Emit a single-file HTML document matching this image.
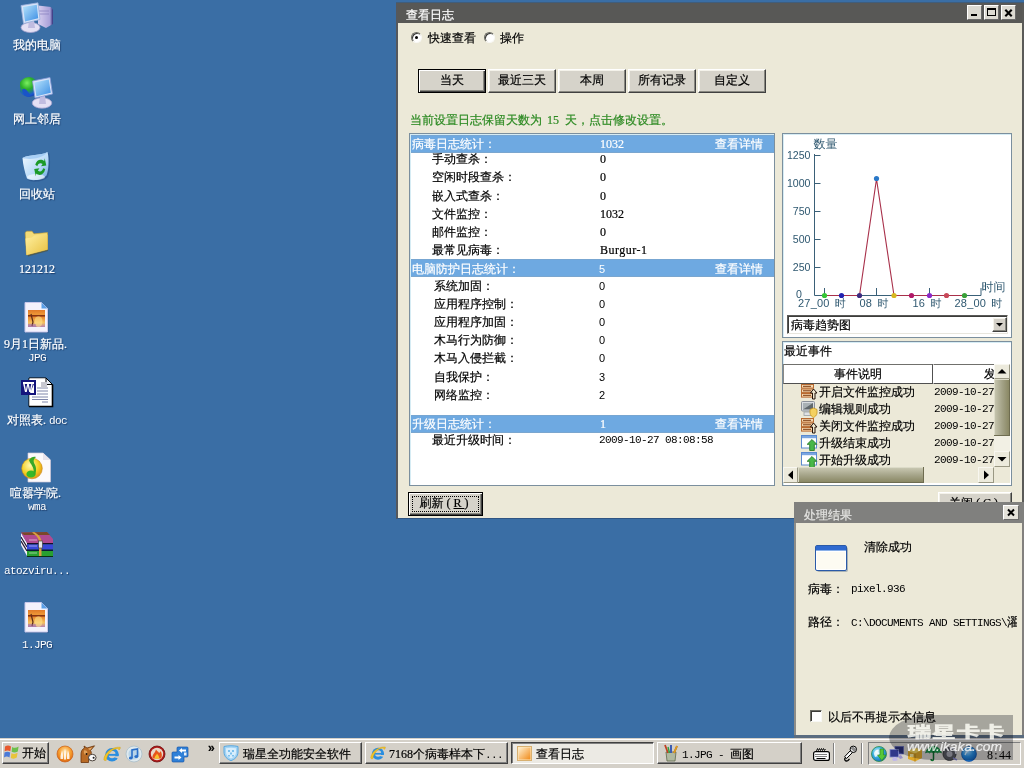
<!DOCTYPE html>
<html lang="zh-CN">
<head>
<meta charset="utf-8">
<title>查看日志</title>
<style>
html,body{margin:0;padding:0;}
body{width:1024px;height:768px;overflow:hidden;background:#3a6ea5;position:relative;
 font-family:"Liberation Serif","WenQuanYi Zen Hei",serif;font-size:12px;line-height:14px;color:#000;-webkit-text-stroke:0.2px;}
.a{position:absolute;white-space:nowrap;}
.ico{position:absolute;width:32px;height:32px;}
.dl{position:absolute;left:0;width:74px;text-align:center;color:#fff;white-space:nowrap;
 text-shadow:1px 1px 1px rgba(10,30,70,.6);}
/* main window */
#win{position:absolute;left:396px;top:3px;width:628px;height:516px;background:#ece9d8;
 box-sizing:border-box;border:0 solid #50504e;border-left:2px solid #55585c;border-right:2px solid #5a5a58;border-bottom:1px solid #2f5482;box-shadow:0 -1px 0 rgba(70,80,90,.55);}
#ttl{position:absolute;left:0;top:0;right:0;height:20px;background:#585856;}
.cb{position:absolute;top:3px;width:15px;height:15px;box-sizing:border-box;background:#dcdad2;
 border:1px solid;border-color:#fff #6a6a6a #6a6a6a #fff;}
.btn{position:absolute;box-sizing:border-box;background:#d6d3ca;text-align:center;
 border:1px solid;border-color:#fff #404040 #404040 #fff;box-shadow:inset -1px -1px 0 #888880,inset 1px 1px 0 #f4f2ea;}
.band{position:absolute;left:1px;right:1px;height:17px;background:#6fa5dc;color:#fff;}
.panel{position:absolute;box-sizing:border-box;background:#fff;border:1px solid #7b8f9e;box-shadow:inset 1px 1px 0 #d6ecf4;}

.rd{position:absolute;width:11px;height:11px;box-sizing:border-box;border-radius:50%;background:#fff;border:1px solid;border-color:#6c6c64 #f8f8f4 #f8f8f4 #6c6c64;box-shadow:inset 1px 1px 0 #3c3c38;}
.rd i{position:absolute;left:3px;top:3px;width:3px;height:3px;border-radius:50%;background:#000;}
.btn{line-height:14px;padding-top:3px;white-space:nowrap;}
.btn.def{border-color:#000;box-shadow:inset 1px 1px 0 #fff,inset -1px -1px 0 #404040,inset -2px -2px 0 #888880;}
.bandp{position:absolute;left:411px;width:363px;background:#6ea9e1;box-shadow:inset 0 1px 0 #77a6d2,inset 0 -1px 0 #7aa6cf;}
.w{color:#fff;}
.s{font-family:"Liberation Sans","WenQuanYi Zen Hei",sans-serif;font-size:11px;-webkit-text-stroke:0;}
.m{font-family:"Liberation Mono","WenQuanYi Zen Hei",monospace;font-size:11px;letter-spacing:-0.6px;-webkit-text-stroke:0;}
.sbb{position:absolute;box-sizing:border-box;background:#eceadc;border:1px solid;border-color:#f8f7f0 #9a9884 #9a9884 #f8f7f0;}
.sbb svg{position:absolute;left:-1px;top:-1px;}
/* taskbar */
#tb{position:absolute;left:0;top:738px;width:1024px;height:30px;background:#d4d0c8;}
#tb:before{content:'';position:absolute;left:0;top:1px;width:1024px;height:1px;background:#fff;}
.tk{position:absolute;top:3px;height:22px;box-sizing:border-box;background:#d4d0c8;
 border:1px solid;border-color:#fff #404040 #404040 #fff;box-shadow:inset -1px -1px 0 #808080;}
</style>
</head>
<body>

<!-- DESKTOP ICONS -->
<div id="desk">
 <!-- 我的电脑 -->
 <svg class="a" style="left:20px;top:2px" width="34" height="32" viewBox="0 0 34 32"><defs><linearGradient id="scr" x1="0" y1="0" x2="1" y2="1"><stop offset="0" stop-color="#b8e4fc"/><stop offset="1" stop-color="#3c8ee4"/></linearGradient><linearGradient id="twr" x1="0" y1="0" x2="1" y2="0"><stop offset="0" stop-color="#d8d0f0"/><stop offset=".8" stop-color="#a8a0d8"/><stop offset="1" stop-color="#30307a"/></linearGradient></defs><path d="M18 3.5 L31 5 L33 8 V22 L26 26 L18 22Z" fill="url(#twr)"/><path d="M19 9 H29 M19 12 H29" stroke="#8a84c0" stroke-width=".8"/><ellipse cx="10.5" cy="25.5" rx="9.5" ry="5" fill="#e4e0f4" stroke="#a8a4d0" stroke-width=".8"/><path d="M9 19 H14 L15 26 H8Z" fill="#c0bce0"/><path d="M1 3.5 L18 .8 L20 17.5 L3.5 21.5Z" fill="#d8e4f8" stroke="#9ab0dc" stroke-width=".8"/><path d="M3 5 L16.8 2.8 L18.2 16.2 L5 19.4Z" fill="url(#scr)"/></svg>
 <div class="dl" style="top:38px">我的电脑</div>
 <!-- 网上邻居 -->
 <svg class="a" style="left:20px;top:76px" width="34" height="33" viewBox="0 0 34 33"><defs><radialGradient id="glb" cx=".4" cy=".3" r=".8"><stop offset="0" stop-color="#7af060"/><stop offset=".4" stop-color="#2cae28"/><stop offset=".75" stop-color="#1c5ad0"/><stop offset="1" stop-color="#123a9a"/></radialGradient></defs><circle cx="9" cy="11" r="10" fill="url(#glb)"/><path d="M2 14 C5 10 8 16 11 20 C8 22 3 20 2 14Z" fill="#1a54c8"/><ellipse cx="22" cy="27" rx="9.8" ry="5.2" fill="#e4e0f4" stroke="#a8a4d0" stroke-width=".8"/><path d="M20 20 H25 L26 28 H19Z" fill="#c0bce0"/><path d="M12.5 5 L30 1.5 L32.5 18 L15 22Z" fill="#d8e4f8" stroke="#8a9cd8" stroke-width=".8"/><path d="M14.3 6.4 L28.8 3.5 L30.8 16.8 L16.4 20.2Z" fill="url(#scr)"/></svg>
 <div class="dl" style="top:112px">网上邻居</div>
 <!-- 回收站 -->
 <svg class="a" style="left:21px;top:151px" width="32" height="32" viewBox="0 0 32 32"><defs><linearGradient id="bin" x1="0" y1="0" x2="1" y2="1"><stop offset="0" stop-color="#f4faff"/><stop offset=".6" stop-color="#b8daf8"/><stop offset="1" stop-color="#6aa4e0"/></linearGradient></defs><path d="M2 7 C8 3 20 5 27 1 C29 8 28 20 26 25 C22 30 10 31 6 28 C4 22 2 14 2 7Z" fill="#1a3a70" opacity=".35" transform="translate(1,1)"/><path d="M1.5 7 C8 3 20 5 26.5 1 C28.5 8 27.5 20 25.5 24.5 C21 29.5 10 30.5 6 27.5 C4 22 2 14 1.5 7Z" fill="url(#bin)"/><path d="M1.5 7 C8 3 20 5 26.5 1 C22 8 8 9 1.5 7Z" fill="#9cc8f4" opacity=".8"/><ellipse cx="15" cy="26" rx="9" ry="3" fill="#fff" opacity=".6"/><g transform="translate(19.2,16.2) scale(1.05,1.45) translate(-19.2,-16.2)"><path d="M14.5 14.5 C15.5 11 20 10 23 12 L23.5 10 L25 15 L20 15.5 L21.5 14 C19.5 13 17 13.5 16.5 15.5Z M24 17.5 C23 21.5 18.5 22.5 15.5 20.5 L15 22.5 L13.5 17.5 L18.5 17 L17 18.5 C19 19.8 21.5 19 22 17Z" fill="#1c9a28"/></g></svg>
 <div class="dl" style="top:187px">回收站</div>
 <!-- folder -->
 <svg class="a" style="left:24px;top:230px" width="26" height="27" viewBox="0 0 26 27"><defs><linearGradient id="fld" x1="0" y1="0" x2="1" y2="1"><stop offset="0" stop-color="#fff0a0"/><stop offset="1" stop-color="#e8c040"/></linearGradient></defs><path d="M2 3.5 C2 2 3 1.5 4 1.5 H8.5 L10.5 4 L23 3 V20 L3 25.5Z" fill="#5a4a10" opacity=".5" transform="translate(1,1)"/><path d="M1.2 3.5 C1.2 2 2.2 1.2 3.2 1.2 H8 L10 3.8 L23.5 2.6 V19.5 L2.5 25Z" fill="#f4dc78" stroke="#c8a030" stroke-width=".6"/><path d="M1.5 8.5 L8 7.5 L10.5 5.5 L23.5 4.5 V19.5 L2.5 25Z" fill="url(#fld)"/></svg>
 <div class="dl" style="top:262px">121212</div>
 <!-- jpg -->
 <svg class="a" style="left:24px;top:302px" width="26" height="32" viewBox="0 0 26 32"><path d="M2 1.5 H18 L24.5 8 V31 H2Z" fill="#0a2a5a" opacity=".35"/><path d="M1 .5 H17.5 L23.5 6.5 V30 H1Z" fill="#f4f2fc" stroke="#c8c8ec" stroke-width="1"/><path d="M17.5 .5 L23.5 6.5 H17.5Z" fill="#5aa0e8"/><defs><linearGradient id="sun1" x1="0" y1="0" x2="0" y2="1"><stop offset="0" stop-color="#e07828"/><stop offset=".28" stop-color="#f09a38"/><stop offset=".34" stop-color="#9a3410"/><stop offset=".42" stop-color="#e88830"/><stop offset=".75" stop-color="#f4c060"/><stop offset="1" stop-color="#b880b0"/></linearGradient></defs><rect x="4" y="8" width="17" height="17" fill="url(#sun1)"/><path d="M7 12 L9 20 L8 24" stroke="#5a2a18" stroke-width="1.2" fill="none"/><ellipse cx="14.5" cy="19.5" rx="4" ry="5.5" fill="#ffe890" opacity=".55"/><path d="M4 13.6 H21" stroke="#7a2a10" stroke-width="1.3" opacity=".8"/><path d="M4 22 H12 V25 H4Z" fill="#a070b0" opacity=".45"/></svg>
 <div class="dl" style="top:338px;line-height:13px">9月1日新品<span style="letter-spacing:3px">.</span><br><span class="m">JPG</span></div>
 <!-- doc -->
 <svg class="a" style="left:20px;top:377px" width="34" height="31" viewBox="0 0 34 31"><path d="M9 1 H26 L32.5 7.5 V29.5 H9Z" fill="#fff" stroke="#000" stroke-width="1"/><path d="M9.5 1.5 H26 L32 7.5 V29 H9.5Z" fill="#fff"/><path d="M26 1 V7.5 H32.5Z" fill="#e8ecf4" stroke="#000" stroke-width="1"/><path d="M32.5 7.5 V29.5 H9" stroke="#000" stroke-width="1.6" fill="none"/><path d="M17 11 H28 M17 14 H28 M17 17 H28 M12 20 H28 M12 22.5 H28 M22 25 H28" stroke="#7078a0" stroke-width=".9"/><rect x="21" y="5" width="6" height="6" fill="#c8c8d0"/><rect x="1" y="3" width="15" height="15" fill="#14147c"/><rect x="3" y="5" width="11" height="11" fill="#fff"/><path d="M3 7 H14 V16 H3Z" fill="#14147c"/><path d="M14 7 V16 H10Z" fill="#fff"/><text x="8" y="15" font-size="10" font-weight="bold" font-family="Liberation Sans, sans-serif" fill="#fff" text-anchor="middle">W</text></svg>
 <div class="dl" style="top:413px">对照表<span style="letter-spacing:3px">.</span><span class="m">doc</span></div>
 <!-- wma -->
 <svg class="a" style="left:20px;top:452px" width="33" height="31" viewBox="0 0 33 31"><defs><radialGradient id="ylw" cx=".4" cy=".35" r=".7"><stop offset="0" stop-color="#fff8b0"/><stop offset=".6" stop-color="#f4d020"/><stop offset="1" stop-color="#e09018"/></radialGradient></defs><path d="M8 1 H23 L30.5 8 V30 H8Z" fill="#fcfafc" stroke="#d0c8d8" stroke-width=".7"/><path d="M23 1 L30.5 8 H23Z" fill="#e8e4ec"/><circle cx="12" cy="16.5" r="10.3" fill="url(#ylw)" stroke="#c88a18" stroke-width=".6"/><ellipse cx="11" cy="22" rx="4.6" ry="3.6" fill="#38b828"/><path d="M13.5 22 C15 15 10 12 9 8 C11 5 14 4 16 5 C14 7 13 8 14 11 C16 14 17 18 15 23Z" fill="#38a828"/></svg>
 <div class="dl" style="top:487px;line-height:13px">喧嚣学院<span style="letter-spacing:3px">.</span><br><span class="m">wma</span></div>
 <!-- rar -->
 <svg class="a" style="left:21px;top:531px" width="33" height="26" viewBox="0 0 33 26"><path d="M0 2 L6 12 V25 L0 14Z" fill="#f4f0f8"/><path d="M0 6 L6 16 M0 10 L6 20" stroke="#201830" stroke-width="1.2"/><path d="M0 1.5 L26 1 L32 8 V12 H6 Z" fill="#b04a90"/><path d="M0 1.5 L26 1 L29 4 H3Z" fill="#7a4828"/><rect x="6" y="12" width="26" height="1.5" fill="#181028"/><rect x="6" y="13.5" width="26" height="5" fill="#3848d8"/><rect x="6" y="18.5" width="26" height="1.5" fill="#0a1838"/><rect x="6" y="20" width="26" height="5" fill="#28a030"/><rect x="6" y="25" width="26" height="1" fill="#0a3010"/><path d="M13 1 C17 3 20 6 20.5 10 V25 H18 V10 C17.5 7 15 4 11 1.5Z" fill="#d8a040"/><rect x="17.5" y="10" width="4" height="7" fill="#e8e8e8" stroke="#303030" stroke-width=".6"/><path d="M8 9 H16 M8 15 H16 M8 22 H16" stroke="#fff" stroke-width="1.2" opacity=".5"/></svg>
 <div class="dl" style="top:563px"><span class="m">atozviru...</span></div>
 <!-- 1.jpg -->
 <svg class="a" style="left:24px;top:602px" width="26" height="32" viewBox="0 0 26 32"><path d="M2 1.5 H18 L24.5 8 V31 H2Z" fill="#0a2a5a" opacity=".35"/><path d="M1 .5 H17.5 L23.5 6.5 V30 H1Z" fill="#f4f2fc" stroke="#c8c8ec" stroke-width="1"/><path d="M17.5 .5 L23.5 6.5 H17.5Z" fill="#5aa0e8"/><defs><linearGradient id="sun2" x1="0" y1="0" x2="0" y2="1"><stop offset="0" stop-color="#e07828"/><stop offset=".28" stop-color="#f09a38"/><stop offset=".34" stop-color="#9a3410"/><stop offset=".42" stop-color="#e88830"/><stop offset=".75" stop-color="#f4c060"/><stop offset="1" stop-color="#b880b0"/></linearGradient></defs><rect x="4" y="8" width="17" height="17" fill="url(#sun2)"/><path d="M7 12 L9 20 L8 24" stroke="#5a2a18" stroke-width="1.2" fill="none"/><ellipse cx="14.5" cy="19.5" rx="4" ry="5.5" fill="#ffe890" opacity=".55"/><path d="M4 13.6 H21" stroke="#7a2a10" stroke-width="1.3" opacity=".8"/><path d="M4 22 H12 V25 H4Z" fill="#a070b0" opacity=".45"/></svg>
 <div class="dl" style="top:637px"><span class="m">1.JPG</span></div>
</div>

<!-- MAIN WINDOW -->
<div id="win">
<div class="o" style="position:absolute;left:-398px;top:-3px;width:0;height:0;">
 <div class="a" style="left:398px;top:3px;width:624px;height:20px;background:#585856;"></div>
 <div class="a" style="left:406px;top:8px;color:#fff;">查看日志</div>
 <div class="cb" style="left:967px;top:5px"><i style="position:absolute;left:3px;top:8px;width:6px;height:2px;background:#000"></i></div>
 <div class="cb" style="left:984px;top:5px"><i style="position:absolute;left:2px;top:2px;width:9px;height:8px;box-sizing:border-box;border:1px solid #000;border-top-width:2px"></i></div>
 <div class="cb" style="left:1001px;top:5px"><svg width="13" height="13" style="position:absolute;left:0;top:0"><path d="M3.3 3.8 L9.7 10.2 M9.7 3.8 L3.3 10.2" stroke="#000" stroke-width="2.1" fill="none"/></svg></div>

 <!-- radios -->
 <div class="rd" style="left:411px;top:32px"><i></i></div>
 <div class="a" style="left:428px;top:31px">快速查看</div>
 <div class="rd" style="left:484px;top:32px"></div>
 <div class="a" style="left:500px;top:31px">操作</div>

 <!-- period buttons -->
 <div class="btn def" style="left:418px;top:69px;width:68px;height:24px;">当天</div>
 <div class="btn" style="left:488px;top:69px;width:68px;height:24px;">最近三天</div>
 <div class="btn" style="left:558px;top:69px;width:68px;height:24px;">本周</div>
 <div class="btn" style="left:628px;top:69px;width:68px;height:24px;">所有记录</div>
 <div class="btn" style="left:698px;top:69px;width:68px;height:24px;">自定义</div>

 <div class="a" style="left:410px;top:113px;color:#2c8a22;">当前设置日志保留天数为 <span style="letter-spacing:0px;margin:0 3px 0 2px">15</span> 天，点击修改设置。</div>

 <!-- stats table -->
 <div class="panel" id="stat" style="left:409px;top:133px;width:366px;height:353px;"></div>
 <div class="bandp" style="top:135px;height:18px;"></div>
 <div class="bandp" style="top:259px;height:18px;"></div>
 <div class="bandp" style="top:415px;height:18px;"></div>

 <div class="a w" style="left:412px;top:137px">病毒日志统计：</div>
 <div class="a w" style="left:600px;top:137px">1032</div>
 <div class="a w" style="left:715px;top:137px">查看详情</div>
 <div class="a" style="left:432px;top:152px">手动查杀：</div><div class="a" style="left:600px;top:152px">0</div>
 <div class="a" style="left:432px;top:170px">空闲时段查杀：</div><div class="a" style="left:600px;top:170px">0</div>
 <div class="a" style="left:432px;top:189px">嵌入式查杀：</div><div class="a" style="left:600px;top:189px">0</div>
 <div class="a" style="left:432px;top:207px">文件监控：</div><div class="a" style="left:600px;top:207px">1032</div>
 <div class="a" style="left:432px;top:225px">邮件监控：</div><div class="a" style="left:600px;top:225px">0</div>
 <div class="a" style="left:432px;top:243px">最常见病毒：</div><div class="a" style="left:600px;top:243px;letter-spacing:.5px">Burgur-1</div>

 <div class="a w" style="left:412px;top:262px">电脑防护日志统计：</div>
 <div class="a w s" style="left:599px;top:262px">5</div>
 <div class="a w" style="left:715px;top:262px">查看详情</div>
 <div class="a" style="left:434px;top:279px">系统加固：</div><div class="a s" style="left:599px;top:279px">0</div>
 <div class="a" style="left:434px;top:297px">应用程序控制：</div><div class="a s" style="left:599px;top:297px">0</div>
 <div class="a" style="left:434px;top:315px">应用程序加固：</div><div class="a s" style="left:599px;top:315px">0</div>
 <div class="a" style="left:434px;top:333px">木马行为防御：</div><div class="a s" style="left:599px;top:333px">0</div>
 <div class="a" style="left:434px;top:351px">木马入侵拦截：</div><div class="a s" style="left:599px;top:351px">0</div>
 <div class="a" style="left:434px;top:370px">自我保护：</div><div class="a s" style="left:599px;top:370px">3</div>
 <div class="a" style="left:434px;top:388px">网络监控：</div><div class="a s" style="left:599px;top:388px">2</div>

 <div class="a w" style="left:412px;top:417px">升级日志统计：</div>
 <div class="a w" style="left:600px;top:417px">1</div>
 <div class="a w" style="left:715px;top:417px">查看详情</div>
 <div class="a" style="left:432px;top:433px">最近升级时间：</div><div class="a m" style="left:599px;top:433px">2009-10-27 08:08:58</div>

 <!-- bottom buttons -->
 <div class="btn def" style="left:408px;top:492px;width:75px;height:24px;"><span style="position:absolute;left:3px;top:3px;right:3px;bottom:3px;border:1px dotted #000"></span>刷新<span style="letter-spacing:3px;margin-left:3px">(<u>R</u>)</span></div>
 <div class="btn" style="left:938px;top:492px;width:74px;height:24px;">关闭<span style="letter-spacing:3px;margin-left:3px">(<u>C</u>)</span></div>

 <div class="panel" style="left:782px;top:133px;width:230px;height:205px;"></div>
 <svg class="a" style="left:782px;top:133px" width="230" height="205" viewBox="0 0 230 205" font-family="Liberation Sans, WenQuanYi Zen Hei, sans-serif" font-size="11" fill="#2f5870"><path d="M32.5 21 V162.5 H199 V155" stroke="#3a6078" stroke-width="1" fill="none"/><path d="M32.5 22.5 h6 M32.5 50.5 h6 M32.5 78.5 h6 M32.5 106.5 h6 M32.5 134.5 h6 M42.5 162.5 v-7.5 M94.5 162.5 v-7.5 M147.5 162.5 v-7.5 " stroke="#3a6078" stroke-width="1" fill="none"/><text x="28.5" y="25.5" text-anchor="end" font-size="10.6">1250</text><text x="28.5" y="53.5" text-anchor="end" font-size="10.6">1000</text><text x="28.5" y="81.5" text-anchor="end" font-size="10.6">750</text><text x="28.5" y="109.5" text-anchor="end" font-size="10.6">500</text><text x="28.5" y="137.5" text-anchor="end" font-size="10.6">250</text><text x="20" y="165" text-anchor="end" font-size="10.6">0</text><text x="31.5" y="15" font-size="12" font-family="Liberation Serif, WenQuanYi Zen Hei, serif">数量</text><text x="199.5" y="157.5" font-size="12" font-family="Liberation Serif, WenQuanYi Zen Hei, serif">时间</text><text x="16" y="173.5" xml:space="preserve" letter-spacing="0.2" word-spacing="2">27_00 时</text><text x="77.5" y="173.5" xml:space="preserve" letter-spacing="0.2" word-spacing="2">08 时</text><text x="130.5" y="173.5" xml:space="preserve" letter-spacing="0.2" word-spacing="2">16 时</text><text x="172.5" y="173.5" xml:space="preserve" letter-spacing="0.2" word-spacing="2">28_00 时</text><path d="M42.5 162.5 H77.5 L94.5 46 L112 162.5 H182.5" stroke="#a8304a" stroke-width="1.1" fill="none"/><circle cx="42.5" cy="162.5" r="2.6" fill="#35c535"/><circle cx="59.5" cy="162.5" r="2.6" fill="#2222b0"/><circle cx="77.5" cy="162.5" r="2.6" fill="#3c2a80"/><circle cx="94.5" cy="45.5" r="2.6" fill="#2a78c8"/><circle cx="112" cy="162.5" r="2.6" fill="#d8b820"/><circle cx="129.5" cy="162.5" r="2.6" fill="#b01868"/><circle cx="147.5" cy="162.5" r="2.6" fill="#8a28c8"/><circle cx="164.5" cy="162.5" r="2.6" fill="#c84858"/><circle cx="182.5" cy="162.5" r="2.6" fill="#38a038"/></svg>
 <div class="a" style="left:787px;top:315px;width:221px;height:19px;box-sizing:border-box;background:#fff;border:1px solid;border-color:#5a5a58 #e8e6de #e8e6de #5a5a58;box-shadow:inset 1px 1px 0 #3c3c3a;"></div>
 <div class="a" style="left:791px;top:318px">病毒趋势图</div>
 <div class="btn" style="left:992px;top:317px;width:15px;height:15px;padding:0;background:#d4d0c8"><svg width="13" height="13" style="position:absolute;left:0;top:0"><path d="M3 5 H10 L6.5 8.6Z" fill="#000"/></svg></div>

 <div class="panel" style="left:782px;top:341px;width:230px;height:145px;"></div>
 <div class="a" style="left:784px;top:344px">最近事件</div>
 <div class="a" style="left:783px;top:383px;width:211px;height:84px;background:#ece9d8;"></div>
 <div class="a" style="left:783px;top:364px;width:150px;height:20px;box-sizing:border-box;background:#fff;border:1px solid;border-color:#70706c #505050 #505050 #8a8a86;text-align:center;line-height:14px;padding-top:2px">事件说明</div>
 <div class="a" style="left:933px;top:364px;width:62px;height:20px;box-sizing:border-box;background:#fff;border:1px solid;border-color:#70706c #505050 #505050 #fff;overflow:hidden;"><span class="a" style="left:50px;top:2px">发生时间</span></div>
 <svg class="a" style="left:801px;top:384px" width="17" height="16" viewBox="0 0 17 16"><rect x="0.5" y="0.5" width="12" height="3.6" fill="#f6d8b0" stroke="#b86a30"/><rect x="0.5" y="5" width="12" height="3.6" fill="#f6d8b0" stroke="#b86a30"/><rect x="0.5" y="9.5" width="12" height="3.6" fill="#f6d8b0" stroke="#b86a30"/><path d="M2 2.3h8M2 6.8h8M2 11.3h8" stroke="#7a3a10" stroke-width="1"/><path d="M12.5 5 L16 9 H14 V15 H11.5 V9 H9.5Z" fill="#f0e8d0" stroke="#201008" stroke-width="1"/></svg>
 <div class="a" style="left:819px;top:385px">开启文件监控成功</div>
 <div class="a m" style="left:934px;top:385px;width:60px;overflow:hidden">2009-10-27 08:08</div>
 <svg class="a" style="left:801px;top:401px" width="17" height="17" viewBox="0 0 17 17"><rect x="0.5" y="0.5" width="13" height="9.5" rx="1" fill="#d8dce0" stroke="#8a9098"/><rect x="2" y="2" width="10" height="6.5" fill="#60686c"/><path d="M2 2h10L2 8.5Z" fill="#a8b0b4"/><rect x="3" y="11" width="8" height="3.5" fill="#e0e2e4" stroke="#9aa0a4" stroke-width=".8"/><path d="M9 8.5 L12.5 7 L16 8.5 V12 C16 14.5 13.5 16 12.5 16.5 C11.5 16 9 14.5 9 12Z" fill="#f4d060" stroke="#c89820" stroke-width=".8"/></svg>
 <div class="a" style="left:819px;top:402px">编辑规则成功</div>
 <div class="a m" style="left:934px;top:402px;width:60px;overflow:hidden">2009-10-27 08:08</div>
 <svg class="a" style="left:801px;top:418px" width="17" height="16" viewBox="0 0 17 16"><rect x="0.5" y="0.5" width="12" height="3.6" fill="#f6d8b0" stroke="#b86a30"/><rect x="0.5" y="5" width="12" height="3.6" fill="#f6d8b0" stroke="#b86a30"/><rect x="0.5" y="9.5" width="12" height="3.6" fill="#f6d8b0" stroke="#b86a30"/><path d="M2 2.3h8M2 6.8h8M2 11.3h8" stroke="#7a3a10" stroke-width="1"/><path d="M12.5 5 L16 9 H14 V15 H11.5 V9 H9.5Z" fill="#f0e8d0" stroke="#201008" stroke-width="1"/></svg>
 <div class="a" style="left:819px;top:419px">关闭文件监控成功</div>
 <div class="a m" style="left:934px;top:419px;width:60px;overflow:hidden">2009-10-27 08:08</div>
 <svg class="a" style="left:801px;top:435px" width="17" height="17" viewBox="0 0 17 17"><rect x="0.5" y="0.5" width="15" height="12.5" fill="#fff" stroke="#5a8ad0"/><rect x="1" y="1" width="14" height="2.2" fill="#7aa6e0"/><path d="M11 4.5 L15.8 9.3 H13.3 V15.5 H8.7 V9.3 H6.2Z" fill="#48b848" stroke="#2a7a2a" stroke-width=".9"/></svg>
 <div class="a" style="left:819px;top:436px">升级结束成功</div>
 <div class="a m" style="left:934px;top:436px;width:60px;overflow:hidden">2009-10-27 08:08</div>
 <svg class="a" style="left:801px;top:452px" width="17" height="17" viewBox="0 0 17 17"><rect x="0.5" y="0.5" width="15" height="12.5" fill="#fff" stroke="#5a8ad0"/><rect x="1" y="1" width="14" height="2.2" fill="#7aa6e0"/><path d="M11 4.5 L15.8 9.3 H13.3 V15.5 H8.7 V9.3 H6.2Z" fill="#48b848" stroke="#2a7a2a" stroke-width=".9"/></svg>
 <div class="a" style="left:819px;top:453px">开始升级成功</div>
 <div class="a m" style="left:934px;top:453px;width:60px;overflow:hidden">2009-10-27 08:08</div>
 <div class="a" style="left:994px;top:364px;width:16px;height:103px;background:#f2f0e4;"></div>
 <div class="sbb" style="left:994px;top:364px;width:16px;height:15px;"><svg width="16" height="15"><path d="M3.5 9.5 H12.5 L8 5Z" fill="#000"/></svg></div>
 <div class="a" style="left:994px;top:379px;width:16px;height:57px;background:linear-gradient(90deg,#c9c8b2 0%,#a4a388 50%,#86845f 100%);box-shadow:inset -1px -1px 0 #6e6c50,inset 1px 1px 0 #dcdbc8;"></div>
 <div class="sbb" style="left:994px;top:451px;width:16px;height:16px;"><svg width="16" height="16"><path d="M3.5 6 H12.5 L8 10.5Z" fill="#000"/></svg></div>
 <div class="a" style="left:783px;top:467px;width:211px;height:16px;background:#ece9d8;"></div>
 <div class="sbb" style="left:783px;top:467px;width:15px;height:16px;"><svg width="15" height="16"><path d="M10 3.5 V12.5 L5 8Z" fill="#000"/></svg></div>
 <div class="a" style="left:798px;top:467px;width:126px;height:16px;background:linear-gradient(180deg,#cccbb6 0%,#a6a58a 50%,#86845f 100%);box-shadow:inset -1px -1px 0 #6e6c50,inset 1px 1px 0 #dcdbc8;"></div>
 <div class="sbb" style="left:978px;top:467px;width:16px;height:16px;"><svg width="16" height="16"><path d="M6 3.5 V12.5 L11 8Z" fill="#000"/></svg></div>
 <div class="a" style="left:994px;top:467px;width:16px;height:16px;background:#ece9d8;"></div>

</div>
</div>

<!-- POPUP -->
<div id="pop" style="position:absolute;left:794px;top:502px;width:230px;height:236px;background:#ece9d8;">
<div class="o" style="position:absolute;left:-794px;top:-502px;width:0;height:0;">
 <div class="a" style="left:794px;top:502px;width:230px;height:21px;background:#80807e;"></div>
 <div class="a" style="left:794px;top:523px;width:2px;height:213px;background:#8c8c88;"></div>
 <div class="a" style="left:1022px;top:523px;width:2px;height:213px;background:#82807e;"></div>
 <div class="a" style="left:794px;top:735px;width:230px;height:3px;background:#5a6c80;"></div>
 <div class="a" style="left:804px;top:508px;color:#e4e4e2;">处理结果</div>
 <div class="cb" style="left:1003px;top:505px;width:16px;height:15px;background:#e4e2da"><svg width="14" height="13" style="position:absolute;left:0;top:0"><path d="M4 3.5 L10 9.5 M10 3.5 L4 9.5" stroke="#000" stroke-width="2" fill="none"/></svg></div>
 <svg class="a" style="left:815px;top:545px" width="34" height="28" viewBox="0 0 34 28"><rect x="2" y="2" width="31" height="25" rx="2" fill="#5a708c" opacity=".45"/><rect x="0.5" y="0.5" width="31" height="25" rx="1.5" fill="#fff" stroke="#2a5aa8"/><rect x="1" y="1" width="30" height="4" fill="#2f6ad0"/><rect x="1" y="5" width="30" height="1" fill="#8ab0e8"/><rect x="2" y="7" width="28" height="17" fill="#fdfbf2"/></svg>
 <div class="a" style="left:864px;top:540px">清除成功</div>
 <div class="a" style="left:808px;top:582px">病毒：</div>
 <div class="a m" style="left:851px;top:582px;">pixel.936</div>
 <div class="a" style="left:808px;top:615px">路径：</div>
 <div class="a" style="left:851px;top:615px;width:166px;overflow:hidden;"><span class="m">C:\DOCUMENTS AND SETTINGS\</span>濯</div>
 <div class="a" style="left:810px;top:710px;width:12px;height:12px;box-sizing:border-box;background:#fff;border:1px solid;border-color:#6c6c64 #f8f8f4 #f8f8f4 #6c6c64;box-shadow:inset 1px 1px 0 #3c3c38;"></div>
 <div class="a" style="left:828px;top:710px">以后不再提示本信息</div>
</div>
</div>

<!-- TASKBAR -->
<div id="tb">
<div class="o" style="position:absolute;left:0;top:-738px;width:0;height:0;">
 <!-- start -->
 <div class="tk" style="left:2px;top:742px;width:47px;height:22px;"></div>
 <svg class="a" style="left:4px;top:744px" width="16" height="16" viewBox="0 0 16 16"><path d="M1 2.5 C3 1.2 5 1.2 7 2.5 L6.3 7.3 C4.5 6.2 2.6 6.2 0.6 7.3Z" fill="#e8582c"/><path d="M8.2 3 C10 4.2 12 4.2 14.6 2.6 L13.8 7.4 C11.6 8.8 9.6 8.8 7.6 7.8Z" fill="#6cc04a"/><path d="M0.5 8.6 C2.5 7.4 4.4 7.4 6.2 8.6 L5.5 13.4 C3.6 12.2 1.8 12.2 0 13.4Z" fill="#4a7ad8"/><path d="M7.4 9.2 C9.4 10.2 11.4 10.2 13.6 8.8 L12.8 13.6 C10.8 15 8.8 15 6.8 14Z" fill="#e8c43a"/></svg>
 <div class="a" style="left:22px;top:746px;font-weight:bold;">开始</div>
 <!-- quick launch -->
 <svg class="a" style="left:56px;top:745px" width="18" height="18" viewBox="0 0 18 18"><defs><radialGradient id="g1" cx=".5" cy=".35" r=".7"><stop offset="0" stop-color="#ffe8b8"/><stop offset=".5" stop-color="#f8a030"/><stop offset="1" stop-color="#d85c08"/></radialGradient></defs><circle cx="9" cy="9" r="8" fill="url(#g1)" stroke="#c86018" stroke-width=".7"/><path d="M4.5 14 C4 10 5.5 8 6 5.5 C7 8 7.2 10 7 14Z M8 14.5 C7.6 9 8.6 6 9 3.5 C9.6 6 10.4 9 10 14.5Z M11 14 C10.8 10 11.4 8 12 5.5 C12.8 8 13.8 10 13.5 14Z" fill="#fff" opacity=".85"/></svg>
 <svg class="a" style="left:79px;top:745px" width="18" height="18" viewBox="0 0 18 18"><path d="M2 17.5 V9 C2 6 3.5 4 5.5 3 L5 1 L8 3 L15.5 .8 L11.5 5.5 C12.5 7 12.5 8.5 12 9.5 L9.5 12 V17.5Z" fill="#b86a24" stroke="#6a340a" stroke-width=".8"/><path d="M5 5.5 C6.5 5 8 6 8.5 7.5 L6 10 C5 9 4.5 7 5 5.5Z" fill="#e0a058"/><path d="M9 3.8 L13.5 2.2 L11 5Z" fill="#e8b070"/><ellipse cx="13.3" cy="12.6" rx="3.8" ry="3.3" fill="#fafafa" stroke="#3a3028" stroke-width=".9"/><circle cx="14.6" cy="12.8" r="1" fill="#181818"/><circle cx="7.5" cy="9" r=".9" fill="#20140a"/></svg>
 <svg class="a" style="left:103px;top:745px" width="18" height="18" viewBox="0 0 18 18"><circle cx="9" cy="9.8" r="6.8" fill="#2a8ee0"/><circle cx="9" cy="9.8" r="3.4" fill="#d4d0c8"/><rect x="5" y="8.8" width="10.5" height="2" fill="#2a8ee0"/><path d="M9.5 11.2 H16 V13.4 L12 12.6Z" fill="#d4d0c8"/><path d="M5.4 8.6 H12.6 C12.2 6.6 10.6 6 9 6 C7.4 6 5.8 6.8 5.4 8.6Z" fill="#d4d0c8"/><path d="M.8 14.5 C1.2 8 9 1.5 17.2 2.2 C17.6 3 17 4.2 16 5 C15.6 4 15.4 3.6 14.6 3.4 C9 4 4 9 3.2 15.4 C2 15.8 1 15.4 .8 14.5Z" fill="#f2c428" stroke="#c89a10" stroke-width=".4"/></svg>
 <svg class="a" style="left:125px;top:745px" width="18" height="18" viewBox="0 0 18 18"><circle cx="9" cy="9" r="8" fill="#dfe9ee" stroke="#a8bcc8" stroke-width=".8"/><circle cx="9" cy="9" r="5.6" fill="#b8d4e8"/><path d="M7 13 V5 L12.5 4 V11.5" stroke="#2a6fc8" stroke-width="1.6" fill="none"/><ellipse cx="5.8" cy="13" rx="1.9" ry="1.5" fill="#2a6fc8"/><ellipse cx="11.3" cy="11.6" rx="1.9" ry="1.5" fill="#2a6fc8"/></svg>
 <svg class="a" style="left:148px;top:745px" width="18" height="18" viewBox="0 0 18 18"><circle cx="9" cy="9" r="8" fill="#b01818" stroke="#701010" stroke-width=".8"/><circle cx="9" cy="9" r="6.2" fill="#e8d8c8"/><path d="M4.5 13.5 C4 9 7 8.5 8 4.5 C9.5 7 10.5 6 11 8 C12 7.5 12.5 6.5 12.5 6 C14.5 9 13.8 12 13.2 13.5Z" fill="#e8541a"/><path d="M6.5 13.8 C6.5 11 8.5 10.5 9 8.5 C10 10 11.5 11.5 11.2 13.8Z" fill="#f8c030"/></svg>
 <svg class="a" style="left:171px;top:745px" width="18" height="18" viewBox="0 0 18 18"><path d="M7 2 H16 C16.8 2 17 2.4 17 3 V11 C17 11.6 16.6 12 16 12 H13 V16 C13 16.6 12.6 17 12 17 H2 C1.4 17 1 16.6 1 16 V8 C1 7.4 1.4 7 2 7 H6 V3 C6 2.4 6.4 2 7 2Z" fill="#2f80d8" stroke="#1a58a8" stroke-width=".7"/><path d="M8 5.5 L11 3 V4.6 H15 V6.6 H11 V8Z" fill="#fff"/><path d="M10.5 12.5 L7.5 15 V13.4 H3.5 V11.4 H7.5 V10Z" fill="#fff"/><rect x="13" y="7.5" width="2.5" height="3" fill="#e8f0fa"/></svg>
 <div class="a" style="left:208px;top:741px;font-family:'Liberation Sans',sans-serif;font-weight:bold;font-size:12px;">»</div>
 <!-- task buttons -->
 <div class="tk" style="left:219px;top:742px;width:143px;height:22px;"></div>
 <svg class="a" style="left:223px;top:745px" width="16" height="16" viewBox="0 0 16 16"><path d="M1 1.5 C5 .5 11 .5 15 1.5 V7 C15 11.5 11.5 14.5 8 15.6 C4.500 14.5 1 11.5 1 7Z" fill="#a4d4f4" stroke="#58a8e0" stroke-width="1"/><path d="M3 3.300 C6 2.600 10 2.600 13 3.300 V7 C13 10.4 10.600 12.600 8 13.500 C5.400 12.600 3 10.400 3 7Z" fill="#d8eefc"/><path d="M5 5 h2 v2 h-2z M9 5 h2 v2 h-2z M7 7.500 h2 v2 h-2z M5 10 h2 v1.500 h-2z M9 10 h2 v1.500 h-2z" fill="#7cc0ec"/></svg>
 <div class="a" style="left:243px;top:747px">瑞星全功能安全软件</div>
 <div class="tk" style="left:365px;top:742px;width:143px;height:22px;"></div>
 <svg class="a" style="left:370px;top:745px" width="16" height="16" viewBox="0 0 18 18"><circle cx="9" cy="9.8" r="6.8" fill="#2a8ee0"/><circle cx="9" cy="9.8" r="3.4" fill="#d4d0c8"/><rect x="5" y="8.8" width="10.5" height="2" fill="#2a8ee0"/><path d="M9.5 11.2 H16 V13.4 L12 12.6Z" fill="#d4d0c8"/><path d="M5.4 8.6 H12.6 C12.2 6.6 10.6 6 9 6 C7.4 6 5.8 6.8 5.4 8.6Z" fill="#d4d0c8"/><path d="M.8 14.5 C1.2 8 9 1.5 17.2 2.2 C17.6 3 17 4.2 16 5 C15.6 4 15.4 3.6 14.6 3.4 C9 4 4 9 3.2 15.4 C2 15.8 1 15.4 .8 14.5Z" fill="#f2c428" stroke="#c89a10" stroke-width=".4"/></svg>
 <div class="a" style="left:389px;top:747px">7168个病毒样本下<span class="m">...</span></div>
 <div class="tk" style="left:511px;top:742px;width:143px;height:22px;border-color:#404040 #fff #fff #404040;box-shadow:inset 1px 1px 0 #808080;background:#eceae4;"></div>
 <svg class="a" style="left:517px;top:746px" width="15" height="15" viewBox="0 0 15 15"><defs><linearGradient id="g2" x1="0" y1="0" x2="1" y2="1"><stop offset="0" stop-color="#fff0d0"/><stop offset="1" stop-color="#f08a18"/></linearGradient></defs><rect x=".5" y=".5" width="14" height="14" fill="#fbe8c0" stroke="#d8b070"/><rect x="1.5" y="1.5" width="12" height="12" fill="url(#g2)"/></svg>
 <div class="a" style="left:536px;top:747px;font-weight:bold">查看日志</div>
 <div class="tk" style="left:657px;top:742px;width:145px;height:22px;"></div>
 <svg class="a" style="left:662px;top:744px" width="18" height="18" viewBox="0 0 18 18"><path d="M4 8 H14 L13 17 H5Z" fill="#b0b8a0" stroke="#60684c" stroke-width=".8"/><path d="M6 9 L3 1 M9 9 V1 M12 9 L15 2" stroke-width="1.8" stroke="#c04020"/><path d="M9 9 V1" stroke-width="1.8" stroke="#3060c0"/><path d="M12 9 L15 2" stroke-width="1.8" stroke="#d8a020"/><path d="M7.5 9 L6 3" stroke-width="1.4" stroke="#30a040"/></svg>
 <div class="a" style="left:682px;top:747px"><span class="m">1.JPG - </span>画图</div>
 <!-- lang bar -->
 <svg class="a" style="left:812px;top:747px" width="18" height="15" viewBox="0 0 18 15"><rect x="1.6" y="4.6" width="15.8" height="8.8" rx="2" fill="#fff" stroke="#000" stroke-width="1.2"/><path d="M3.5 7.5 h1 m1 0 h1 m1 0 h1 m1 0 h1 m1 0 h1 m1 0 h1 M3.5 9.5 h1 m1 0 h1 m1 0 h1 m1 0 h1 m1 0 h1 m1 0 h1 M4.5 11.5 h9" stroke="#000" stroke-width="1" fill="none"/><path d="M4.5 4 L5.5 1.5 L6.5 3.5 L7.5 1.5 L8.5 3.5 L9.5 1.5 L10.5 3.5 L11.5 1.5 L12.5 3.5 L13.5 2" stroke="#000" stroke-width=".9" fill="none"/></svg>
 <div class="a" style="left:833px;top:743px;width:1px;height:21px;background:#808080;box-shadow:1px 0 0 #fff"></div>
 <svg class="a" style="left:842px;top:745px" width="16" height="18" viewBox="0 0 16 18"><path d="M9.5 6.5 L3.5 12.5 C1.5 14.5 3.5 17 6 15.5 L7.5 14" stroke="#000" stroke-width="1.3" fill="none"/><path d="M8.5 5.5 L10.5 7.5 L4.5 13.5 L2.8 11.5Z" fill="#fff" stroke="#000" stroke-width="1"/><circle cx="11.3" cy="4.3" r="3.2" fill="#d8d8d8" stroke="#000" stroke-width="1"/><path d="M9.5 3 L12.5 6 M10.5 2 L13.5 5" stroke="#000" stroke-width=".7"/></svg>
 <div class="a" style="left:861px;top:743px;width:1px;height:21px;background:#808080;box-shadow:1px 0 0 #fff"></div>
 <!-- tray -->
 <div class="a" style="left:868px;top:742px;width:153px;height:23px;box-sizing:border-box;border:1px solid;border-color:#808080 #fff #fff #808080;"></div>
 <svg class="a" style="left:871px;top:746px" width="16" height="16" viewBox="0 0 16 16"><defs><radialGradient id="t1" cx=".4" cy=".35" r=".7"><stop offset="0" stop-color="#d8f8ff"/><stop offset=".5" stop-color="#38b0e0"/><stop offset="1" stop-color="#1868b8"/></radialGradient></defs><circle cx="8" cy="8" r="7.5" fill="url(#t1)" stroke="#2a8a4a" stroke-width=".8"/><path d="M3 8 C3 5 6 3 8 4 L6 6 L9 7 L7 10 L4 11Z" fill="#fff" opacity=".8"/><path d="M9 3 H12.5 V9 H15 L10.8 14.5 L6.5 9 H9Z" fill="#58c838" stroke="#2a8a18" stroke-width=".6"/></svg>
 <svg class="a" style="left:889px;top:746px" width="16" height="16" viewBox="0 0 16 16"><rect x="6" y="0.5" width="8.5" height="7.5" fill="#28307a" stroke="#6068b0" stroke-width=".8"/><rect x="1" y="3.5" width="8.5" height="7.5" fill="#30388a" stroke="#8088c8" stroke-width=".8"/><path d="M3 13 L5 11 H7 L9 14 C6 16 3 15 3 13Z" fill="#c0b8e8"/><path d="M9 10 L12 9 L14 12 L11 13Z" fill="#9890c8"/></svg>
 <svg class="a" style="left:907px;top:746px" width="16" height="16" viewBox="0 0 16 16"><path d="M1 5 L8 2 L15 4 V12 L8 15.5 L1 13Z" fill="#e0a828"/><path d="M1 5 L8 7.5 L15 4 L8 2Z" fill="#f8d860"/><path d="M8 7.5 V15.5" stroke="#a87818" stroke-width=".8"/><rect x="3" y="8" width="3.5" height="3" fill="#fff0a0"/></svg>
 <svg class="a" style="left:925px;top:745px" width="17" height="17" viewBox="0 0 17 17"><path d="M.5 8 C2 3 6 1 8.5 1 C11 1 15 3 16.5 8 C15 7 13.5 7 12.5 8 C11.5 7 10 7 8.5 8 C7 7 5.5 7 4.5 8 C3.5 7 2 7 .5 8Z" fill="#18984a" stroke="#0a6a2a" stroke-width=".6"/><path d="M8.5 1 V14 C8.5 16 6 16 6 14" stroke="#0a6a2a" stroke-width="1.5" fill="none"/></svg>
 <svg class="a" style="left:942px;top:746px" width="16" height="16" viewBox="0 0 16 16"><circle cx="7.5" cy="8" r="6.5" fill="#585860" stroke="#38383c" stroke-width="1"/><circle cx="7.5" cy="8" r="3" fill="#a8a8b0"/><path d="M7.5 1.5 A6.5 6.5 0 0 1 14 8" stroke="#d8d8e0" stroke-width="1.5" fill="none"/><path d="M11 12 L15 14" stroke="#8080c0" stroke-width="1.5"/></svg>
 <svg class="a" style="left:961px;top:746px" width="16" height="16" viewBox="0 0 16 16"><defs><radialGradient id="t6" cx=".4" cy=".3" r=".75"><stop offset="0" stop-color="#a8e0ff"/><stop offset=".5" stop-color="#2890e0"/><stop offset="1" stop-color="#0c58b0"/></radialGradient></defs><circle cx="8" cy="8" r="7.5" fill="url(#t6)" stroke="#0c4a98" stroke-width=".6"/><path d="M4 9 C5 5 9 3 12 4" stroke="#d8f0ff" stroke-width="1.2" fill="none"/></svg>
 <div class="a" style="left:987px;top:748px;font-size:12px;letter-spacing:0;-webkit-text-stroke:0"><span>8</span><span style="display:inline-block;width:6px;text-align:center">:</span><span>44</span></div>
</div>
</div>

<div id="wm" style="position:absolute;left:889px;top:715px;width:124px;height:45px;background:#b4b5ba;mix-blend-mode:multiply;border-radius:45px 0 0 45px / 23px 0 0 23px;"></div>
<div class="a" style="left:907px;top:722px;width:98px;height:20px;overflow:visible;"><span style="display:inline-block;font-family:'Liberation Sans','Noto Sans CJK SC',sans-serif;font-weight:900;font-size:15px;line-height:20px;color:rgba(255,255,248,.82);transform-origin:0 50%;transform:scaleX(1.63);letter-spacing:0">瑞星卡卡</span></div>
<div class="a" style="left:907px;top:739px;"><span style="display:inline-block;font-family:'Liberation Sans',sans-serif;font-style:italic;font-size:13px;line-height:16px;color:rgba(255,255,255,.8);transform-origin:0 50%;transform:scaleX(1.06);">www.ikaka.com</span></div>


</body>
</html>
